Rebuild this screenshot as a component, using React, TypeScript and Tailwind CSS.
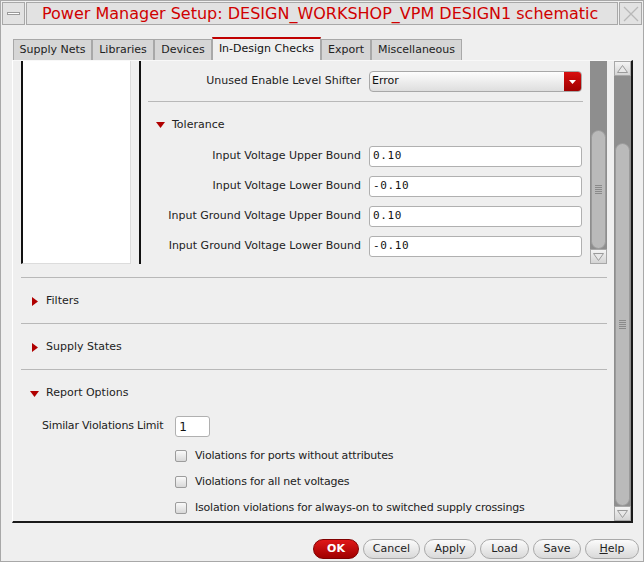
import React from "react";

const font = { fontFamily: '"DejaVu Sans", "Liberation Sans", sans-serif' };

const Tri = ({ open }: { open: boolean }) =>
  open ? (
    <svg width="9" height="6" viewBox="0 0 9 6" className="shrink-0">
      <path d="M0 0 L9 0 L4.5 6 Z" fill="#b00000" />
    </svg>
  ) : (
    <svg width="6" height="9" viewBox="0 0 6 9" className="shrink-0">
      <path d="M0 0 L6 4.5 L0 9 Z" fill="#b00000" />
    </svg>
  );

const Grip = () => (
  <div className="flex flex-col gap-[1px] items-center">
    {[0, 1, 2, 3, 4].map((i) => (
      <div key={i} className="w-[7px] h-px bg-[#8a8a8a]" />
    ))}
  </div>
);

const ArrowBtn = ({ up }: { up: boolean }) => (
  <div className="h-[15px] w-full bg-gradient-to-b from-[#f4f4f4] to-[#d4d4d4] border border-[#a8a8a8] flex items-center justify-center shrink-0">
    <svg width="11" height="8" viewBox="0 0 11 8">
      {up ? (
        <path d="M0.5 7.5 L5.5 0.5 L10.5 7.5 Z" fill="#e8e8e8" stroke="#9a9a9a" />
      ) : (
        <path d="M0.5 0.5 L5.5 7.5 L10.5 0.5 Z" fill="#e8e8e8" stroke="#9a9a9a" />
      )}
    </svg>
  </div>
);

const Field = ({ value }: { value: string }) => (
  <div
    className="w-[213px] h-[21px] bg-white border border-[#b0b0b0] rounded-[3px] flex items-center pl-[3px] text-[11px] text-[#111] tracking-[0.6px]"
    style={{ fontFamily: '"DejaVu Sans Mono", "Liberation Mono", monospace' }}
  >
    {value}
  </div>
);

const Row = ({ label, children }: { label: string; children: React.ReactNode }) => (
  <div className="flex items-center gap-[8px]">
    <div className="w-[213px] text-right text-[11px] text-[#222]">{label}</div>
    {children}
  </div>
);

const Check = ({ label }: { label: string }) => (
  <div className="flex items-center gap-[8px] h-[26px]">
    <div className="w-[12px] h-[12px] rounded-[2px] border border-[#9c9c9c] bg-gradient-to-b from-[#fafafa] to-[#d8d8d8]" />
    <span className="text-[11px] text-[#222] tracking-[-0.2px]">{label}</span>
  </div>
);

const Btn = ({ label, w, ok }: { label: React.ReactNode; w: string; ok?: boolean }) => (
  <div
    className={
      ok
        ? `${w} h-[20px] rounded-full bg-gradient-to-b from-[#e01818] to-[#a00000] border border-[#800000] text-white font-bold text-[11px] flex items-center justify-center`
        : `${w} h-[20px] rounded-full bg-gradient-to-b from-[#fbfbfb] to-[#d9d9d9] border border-[#a9a9a9] text-[#222] text-[11px] flex items-center justify-center`
    }
  >
    {label}
  </div>
);

const Section = ({ label, open }: { label: string; open: boolean }) => (
  <div className={open ? "h-[45px] flex items-center gap-[7px] pl-[9px] pt-[2px]" : "h-[45px] flex items-center gap-[8px] pl-[11px] pt-[2px]"}>
    <Tri open={open} />
    <span className="text-[11px] text-[#222]">{label}</span>
  </div>
);

export default function App() {
  const tabs = ["Supply Nets", "Libraries", "Devices", "In-Design Checks", "Export", "Miscellaneous"];
  const widths = ["w-[79px]", "w-[62px]", "w-[58px]", "w-[109px]", "w-[50px]", "w-[91px]"];
  return (
    <div style={font} className="w-[644px] h-[562px] bg-[#efefef] border border-[#a8a8a8] flex flex-col overflow-hidden">
      {/* title bar */}
      <div className="h-[26px] flex items-stretch gap-[1px] pt-[1px] pl-[1px] pr-[1px] shrink-0">
        <div className="w-[23px] h-[23px] bg-[#e2e2e2] border border-[#a8a8a8] flex items-center justify-center">
          <div className="w-[13px] h-[3px] border border-[#9a9a9a] bg-white" />
        </div>
        <div className="flex-1 h-[23px] bg-[#e2e2e2] border border-[#a8a8a8] flex items-center pl-[15px] text-[16px] text-[#d00000] whitespace-nowrap overflow-hidden">
          Power Manager Setup: DESIGN_WORKSHOP_VPM DESIGN1 schematic
        </div>
        <div className="w-[23px] h-[23px] bg-[#e2e2e2] border border-[#a8a8a8] flex items-center justify-center">
          <svg width="16" height="16" viewBox="0 0 16 16">
            <path d="M1 1 L15 15 M15 1 L1 15" stroke="#b8b8b8" strokeWidth="1.3" />
          </svg>
        </div>
      </div>

      {/* tabs */}
      <div className="flex items-end pl-[12px] mt-[11px] h-[22px] shrink-0">
        {tabs.map((t, i) => (
          <div
            key={t}
            className={
              i === 3
                ? `${widths[i]} h-[23px] bg-[#efefef] border-t-2 border-t-[#c00000] border-x border-x-[#a8a8a8] flex items-center justify-center text-[11px] text-[#111]`
                : `${widths[i]} h-[21px] bg-[#d6d6d6] border border-[#a8a8a8] border-b-0 flex items-center justify-center pt-[1px] text-[11px] text-[#222]`
            }
          >
            {t}
          </div>
        ))}
      </div>

      {/* panel */}
      <div className="ml-[11px] w-[621px] h-[463px] border-t border-t-[#f8f8f8] border-l border-l-[#ffffff] border-r-2 border-r-[#1a1a1a] border-b-2 border-b-[#1a1a1a] flex shrink-0">
        <div className="flex-1 flex flex-col pl-[8px] pr-[7px]">
          {/* top split area */}
          <div className="h-[203px] flex gap-[8px] shrink-0">
            <div className="w-[110px] bg-white border-l-2 border-l-[#111] border-r border-r-[#dcdcdc] border-b border-b-[#dcdcdc]" />
            <div className="flex-1 flex border-l-2 border-l-[#111]">
              <div className="flex-1 flex flex-col pl-[7px] pr-[7px] pt-[10px]">
                <Row label="Unused Enable Level Shifter">
                  <div className="w-[213px] h-[21px] rounded-[4px] border border-[#a8a8a8] bg-gradient-to-b from-[#fdfdfd] to-[#dedede] flex items-center overflow-hidden">
                    <span className="flex-1 pl-[2px] text-[11px] text-[#111]">Error</span>
                    <div className="w-[17px] h-full bg-gradient-to-b from-[#d81010] to-[#a00000] flex items-center justify-center">
                      <svg width="7" height="4" viewBox="0 0 7 4">
                        <path d="M0 0 L7 0 L3.5 4 Z" fill="#fff" />
                      </svg>
                    </div>
                  </div>
                </Row>
                <div className="h-px bg-[#b8b8b8] mt-[9px]" />
                <div className="h-[24px] mt-[11px] flex items-center gap-[7px] pl-[8px]">
                  <Tri open />
                  <span className="text-[11px] text-[#222]">Tolerance</span>
                </div>
                <div className="flex flex-col gap-[9px] mt-[9px]">
                  <Row label="Input Voltage Upper Bound">
                    <Field value="0.10" />
                  </Row>
                  <Row label="Input Voltage Lower Bound">
                    <Field value="-0.10" />
                  </Row>
                  <Row label="Input Ground Voltage Upper Bound">
                    <Field value="0.10" />
                  </Row>
                  <Row label="Input Ground Voltage Lower Bound">
                    <Field value="-0.10" />
                  </Row>
                </div>
              </div>
              {/* inner scrollbar */}
              <div className="w-[17px] flex flex-col bg-[#8e8e8e]">
                <div className="h-[69px]" />
                <div className="flex-1 mx-[1px] rounded-full bg-[#bababa] border border-[#9a9a9a] flex items-center justify-center">
                  <Grip />
                </div>
                <ArrowBtn up={false} />
              </div>
            </div>
          </div>

          {/* collapsible sections */}
          <div className="h-px bg-[#b8b8b8] mt-[13px]" />
          <Section label="Filters" open={false} />
          <div className="h-px bg-[#b8b8b8]" />
          <Section label="Supply States" open={false} />
          <div className="h-px bg-[#b8b8b8]" />
          <Section label="Report Options" open />
          <div className="flex items-center gap-[12px] pl-[21px] mt-[1px]">
            <span className="text-[11px] text-[#222] tracking-[-0.2px]">Similar Violations Limit</span>
            <div className="w-[35px] h-[21px] bg-white border border-[#b0b0b0] rounded-[3px] flex items-center pl-[3px] text-[12px] text-[#111]">
              1
            </div>
          </div>
          <div className="flex flex-col pl-[154px] mt-[6px]">
            <Check label="Violations for ports without attributes" />
            <Check label="Violations for all net voltages" />
            <Check label="Isolation violations for always-on to switched supply crossings" />
          </div>
        </div>

        {/* outer scrollbar */}
        <div className="w-[17px] flex flex-col bg-[#8e8e8e]">
          <ArrowBtn up />
          <div className="h-[67px]" />
          <div className="flex-1 mx-[1px] rounded-full bg-[#bababa] border border-[#9a9a9a] flex items-center justify-center">
            <Grip />
          </div>
          <ArrowBtn up={false} />
        </div>
      </div>

      {/* buttons */}
      <div className="flex justify-end gap-[4px] pr-[4px] mt-[16px]">
        <Btn label="OK" w="w-[46px]" ok />
        <Btn label="Cancel" w="w-[57px]" />
        <Btn label="Apply" w="w-[52px]" />
        <Btn label="Load" w="w-[49px]" />
        <Btn label="Save" w="w-[48px]" />
        <Btn
          label={
            <span>
              <span className="underline">H</span>elp
            </span>
          }
          w="w-[54px]"
        />
      </div>
    </div>
  );
}
